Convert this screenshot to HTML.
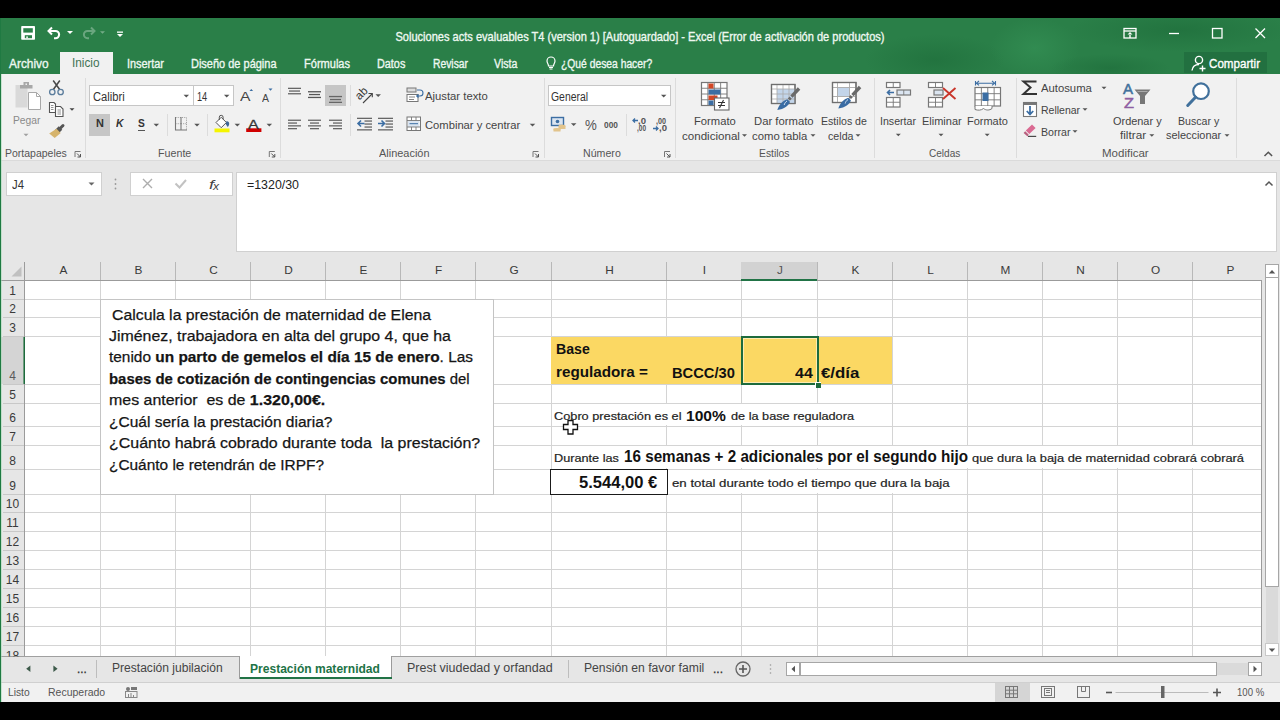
<!DOCTYPE html>
<html><head><meta charset="utf-8"><style>
html,body{margin:0;padding:0;width:1280px;height:720px;overflow:hidden;background:#000;}
body{position:relative;font-family:"Liberation Sans", sans-serif;}
div,svg{box-sizing:border-box;}
.t{position:absolute;white-space:pre;}
</style></head><body>
<div style="position:absolute;left:0px;top:18px;width:1280px;height:56px;background:#2a7f48;"></div>
<svg style="position:absolute;left:0;top:18px;" width="1280" height="56"><defs><radialGradient id="gd1"><stop offset="0" stop-color="#1c6a38" stop-opacity="0.55"/><stop offset="1" stop-color="#1c6a38" stop-opacity="0"/></radialGradient><radialGradient id="gl1"><stop offset="0" stop-color="#3a9a5c" stop-opacity="0.45"/><stop offset="1" stop-color="#3a9a5c" stop-opacity="0"/></radialGradient></defs><ellipse cx="935" cy="42" rx="70" ry="26" fill="url(#gd1)"/><ellipse cx="1035" cy="30" rx="45" ry="30" fill="url(#gl1)"/><ellipse cx="1180" cy="12" rx="110" ry="22" fill="url(#gd1)"/><ellipse cx="1110" cy="50" rx="60" ry="14" fill="url(#gd1)"/></svg>
<div style="position:absolute;left:0px;top:74px;width:1280px;height:87px;background:#f1f1f1;"></div>
<div style="position:absolute;left:0px;top:160px;width:1280px;height:1px;background:#dadada;"></div>
<div style="position:absolute;left:0px;top:161px;width:1280px;height:101px;background:#e6e6e6;"></div>
<div style="position:absolute;left:0px;top:262px;width:1280px;height:394px;background:#fff;"></div>
<div style="position:absolute;left:0px;top:656px;width:1280px;height:26px;background:#e6e6e6;"></div>
<div style="position:absolute;left:0px;top:682px;width:1280px;height:20px;background:#f1f1f1;"></div>
<div style="position:absolute;left:60px;top:52px;width:53px;height:22px;background:#f1f1f1;"></div>
<div style="position:absolute;left:1184px;top:52px;width:83px;height:21px;background:#227040;"></div>
<div style="position:absolute;left:85px;top:78px;width:1px;height:80px;background:#dcdcdc;"></div>
<div style="position:absolute;left:279.5px;top:78px;width:1px;height:80px;background:#dcdcdc;"></div>
<div style="position:absolute;left:543.5px;top:78px;width:1px;height:80px;background:#dcdcdc;"></div>
<div style="position:absolute;left:675px;top:78px;width:1px;height:80px;background:#dcdcdc;"></div>
<div style="position:absolute;left:873.5px;top:78px;width:1px;height:80px;background:#dcdcdc;"></div>
<div style="position:absolute;left:1015.5px;top:78px;width:1px;height:80px;background:#dcdcdc;"></div>
<div style="position:absolute;left:1236px;top:78px;width:1px;height:80px;background:#dcdcdc;"></div>
<div style="position:absolute;left:89px;top:85px;width:105px;height:21px;background:#fff;border:1px solid #c6c6c6;"></div>
<div style="position:absolute;left:193px;top:85px;width:41px;height:21px;background:#fff;border:1px solid #c6c6c6;"></div>
<div style="position:absolute;left:89px;top:114px;width:21px;height:22px;background:#c6c6c6;"></div>
<div style="position:absolute;left:137.5px;top:129.5px;width:7px;height:1.2px;background:#555;"></div>
<div style="position:absolute;left:166.8px;top:114px;width:1px;height:22px;background:#dcdcdc;"></div>
<div style="position:absolute;left:207px;top:114px;width:1px;height:22px;background:#dcdcdc;"></div>
<div style="position:absolute;left:325px;top:85px;width:21px;height:21px;background:#c6c6c6;"></div>
<div style="position:absolute;left:349.8px;top:85px;width:1px;height:21px;background:#dcdcdc;"></div>
<div style="position:absolute;left:349.8px;top:114px;width:1px;height:22px;background:#dcdcdc;"></div>
<div style="position:absolute;left:548px;top:85px;width:123px;height:21px;background:#fff;border:1px solid #c6c6c6;"></div>
<div style="position:absolute;left:625.7px;top:114px;width:1px;height:22px;background:#dcdcdc;"></div>
<div style="position:absolute;left:6px;top:172px;width:96px;height:24px;background:#fff;border:1px solid #d0d0d0;"></div>
<div style="position:absolute;left:130px;top:172px;width:103px;height:24px;background:#fff;border:1px solid #d0d0d0;"></div>
<div style="position:absolute;left:236px;top:172px;width:1041px;height:80px;background:#fff;border:1px solid #d0d0d0;"></div>
<div style="position:absolute;left:0px;top:262px;width:1262px;height:18px;background:#e6e6e6;"></div>
<div style="position:absolute;left:0px;top:280px;width:25px;height:376px;background:#e6e6e6;"></div>
<div style="position:absolute;left:100px;top:280px;width:1px;height:376px;background:#d4d4d4;"></div>
<div style="position:absolute;left:175px;top:280px;width:1px;height:376px;background:#d4d4d4;"></div>
<div style="position:absolute;left:250px;top:280px;width:1px;height:376px;background:#d4d4d4;"></div>
<div style="position:absolute;left:325px;top:280px;width:1px;height:376px;background:#d4d4d4;"></div>
<div style="position:absolute;left:400px;top:280px;width:1px;height:376px;background:#d4d4d4;"></div>
<div style="position:absolute;left:475px;top:280px;width:1px;height:376px;background:#d4d4d4;"></div>
<div style="position:absolute;left:551px;top:280px;width:1px;height:376px;background:#d4d4d4;"></div>
<div style="position:absolute;left:666px;top:280px;width:1px;height:376px;background:#d4d4d4;"></div>
<div style="position:absolute;left:741px;top:280px;width:1px;height:376px;background:#d4d4d4;"></div>
<div style="position:absolute;left:817px;top:280px;width:1px;height:376px;background:#d4d4d4;"></div>
<div style="position:absolute;left:892px;top:280px;width:1px;height:376px;background:#d4d4d4;"></div>
<div style="position:absolute;left:967px;top:280px;width:1px;height:376px;background:#d4d4d4;"></div>
<div style="position:absolute;left:1042px;top:280px;width:1px;height:376px;background:#d4d4d4;"></div>
<div style="position:absolute;left:1117px;top:280px;width:1px;height:376px;background:#d4d4d4;"></div>
<div style="position:absolute;left:1192px;top:280px;width:1px;height:376px;background:#d4d4d4;"></div>
<div style="position:absolute;left:25px;top:299px;width:1237px;height:1px;background:#d4d4d4;"></div>
<div style="position:absolute;left:25px;top:317px;width:1237px;height:1px;background:#d4d4d4;"></div>
<div style="position:absolute;left:25px;top:336px;width:1237px;height:1px;background:#d4d4d4;"></div>
<div style="position:absolute;left:25px;top:384px;width:1237px;height:1px;background:#d4d4d4;"></div>
<div style="position:absolute;left:25px;top:403px;width:1237px;height:1px;background:#d4d4d4;"></div>
<div style="position:absolute;left:25px;top:426px;width:1237px;height:1px;background:#d4d4d4;"></div>
<div style="position:absolute;left:25px;top:445px;width:1237px;height:1px;background:#d4d4d4;"></div>
<div style="position:absolute;left:25px;top:469px;width:1237px;height:1px;background:#d4d4d4;"></div>
<div style="position:absolute;left:25px;top:494px;width:1237px;height:1px;background:#d4d4d4;"></div>
<div style="position:absolute;left:25px;top:512px;width:1237px;height:1px;background:#d4d4d4;"></div>
<div style="position:absolute;left:25px;top:531px;width:1237px;height:1px;background:#d4d4d4;"></div>
<div style="position:absolute;left:25px;top:550px;width:1237px;height:1px;background:#d4d4d4;"></div>
<div style="position:absolute;left:25px;top:569px;width:1237px;height:1px;background:#d4d4d4;"></div>
<div style="position:absolute;left:25px;top:588px;width:1237px;height:1px;background:#d4d4d4;"></div>
<div style="position:absolute;left:25px;top:607px;width:1237px;height:1px;background:#d4d4d4;"></div>
<div style="position:absolute;left:25px;top:626px;width:1237px;height:1px;background:#d4d4d4;"></div>
<div style="position:absolute;left:25px;top:645px;width:1237px;height:1px;background:#d4d4d4;"></div>
<div style="position:absolute;left:100px;top:262px;width:1px;height:18px;background:#b8b8b8;"></div>
<div style="position:absolute;left:175px;top:262px;width:1px;height:18px;background:#b8b8b8;"></div>
<div style="position:absolute;left:250px;top:262px;width:1px;height:18px;background:#b8b8b8;"></div>
<div style="position:absolute;left:325px;top:262px;width:1px;height:18px;background:#b8b8b8;"></div>
<div style="position:absolute;left:400px;top:262px;width:1px;height:18px;background:#b8b8b8;"></div>
<div style="position:absolute;left:475px;top:262px;width:1px;height:18px;background:#b8b8b8;"></div>
<div style="position:absolute;left:551px;top:262px;width:1px;height:18px;background:#b8b8b8;"></div>
<div style="position:absolute;left:666px;top:262px;width:1px;height:18px;background:#b8b8b8;"></div>
<div style="position:absolute;left:741px;top:262px;width:1px;height:18px;background:#b8b8b8;"></div>
<div style="position:absolute;left:817px;top:262px;width:1px;height:18px;background:#b8b8b8;"></div>
<div style="position:absolute;left:892px;top:262px;width:1px;height:18px;background:#b8b8b8;"></div>
<div style="position:absolute;left:967px;top:262px;width:1px;height:18px;background:#b8b8b8;"></div>
<div style="position:absolute;left:1042px;top:262px;width:1px;height:18px;background:#b8b8b8;"></div>
<div style="position:absolute;left:1117px;top:262px;width:1px;height:18px;background:#b8b8b8;"></div>
<div style="position:absolute;left:1192px;top:262px;width:1px;height:18px;background:#b8b8b8;"></div>
<div style="position:absolute;left:3px;top:299px;width:22px;height:1px;background:#c8c8c8;"></div>
<div style="position:absolute;left:3px;top:317px;width:22px;height:1px;background:#c8c8c8;"></div>
<div style="position:absolute;left:3px;top:336px;width:22px;height:1px;background:#c8c8c8;"></div>
<div style="position:absolute;left:3px;top:384px;width:22px;height:1px;background:#c8c8c8;"></div>
<div style="position:absolute;left:3px;top:403px;width:22px;height:1px;background:#c8c8c8;"></div>
<div style="position:absolute;left:3px;top:426px;width:22px;height:1px;background:#c8c8c8;"></div>
<div style="position:absolute;left:3px;top:445px;width:22px;height:1px;background:#c8c8c8;"></div>
<div style="position:absolute;left:3px;top:469px;width:22px;height:1px;background:#c8c8c8;"></div>
<div style="position:absolute;left:3px;top:494px;width:22px;height:1px;background:#c8c8c8;"></div>
<div style="position:absolute;left:3px;top:512px;width:22px;height:1px;background:#c8c8c8;"></div>
<div style="position:absolute;left:3px;top:531px;width:22px;height:1px;background:#c8c8c8;"></div>
<div style="position:absolute;left:3px;top:550px;width:22px;height:1px;background:#c8c8c8;"></div>
<div style="position:absolute;left:3px;top:569px;width:22px;height:1px;background:#c8c8c8;"></div>
<div style="position:absolute;left:3px;top:588px;width:22px;height:1px;background:#c8c8c8;"></div>
<div style="position:absolute;left:3px;top:607px;width:22px;height:1px;background:#c8c8c8;"></div>
<div style="position:absolute;left:3px;top:626px;width:22px;height:1px;background:#c8c8c8;"></div>
<div style="position:absolute;left:3px;top:645px;width:22px;height:1px;background:#c8c8c8;"></div>
<div style="position:absolute;left:0px;top:280px;width:1262px;height:1px;background:#9b9b9b;"></div>
<div style="position:absolute;left:24px;top:262px;width:1px;height:394px;background:#9b9b9b;"></div>
<div style="position:absolute;left:1261px;top:280px;width:1px;height:376px;background:#9b9b9b;"></div>
<div style="position:absolute;left:741px;top:262px;width:76px;height:18px;background:#d2d2d2;"></div>
<div style="position:absolute;left:741px;top:279px;width:76px;height:2px;background:#217346;"></div>
<div style="position:absolute;left:0px;top:337px;width:25px;height:47px;background:#d4d4d4;"></div>
<div style="position:absolute;left:24px;top:337px;width:1px;height:47px;background:#1d6b3d;"></div>
<div style="position:absolute;left:23px;top:337px;width:1px;height:47px;background:#6f9c7f;"></div>
<div style="position:absolute;left:100px;top:299px;width:394px;height:196px;background:#fff;border:1px solid #c4c4c4;"></div>
<div style="position:absolute;left:551px;top:337px;width:341px;height:47px;background:#fbd863;"></div>
<div style="position:absolute;left:741px;top:336px;width:78px;height:49px;border:2px solid #1d6b3d;"></div>
<div style="position:absolute;left:743px;top:338px;width:74px;height:45px;border:1px solid rgba(255,255,255,0.5);"></div>
<div style="position:absolute;left:815px;top:381.5px;width:6px;height:6px;background:#1d6b3d;border-left:1px solid #fff;border-top:1px solid #fff;"></div>
<div style="position:absolute;left:552px;top:404px;width:330px;height:21px;background:#fff;"></div>
<div style="position:absolute;left:552px;top:446px;width:709px;height:22px;background:#fff;"></div>
<div style="position:absolute;left:667px;top:470px;width:300px;height:23px;background:#fff;"></div>
<div style="position:absolute;left:550px;top:468.5px;width:117.5px;height:26px;border:1.6px solid #1a1a1a;background:#fff;"></div>
<div style="position:absolute;left:1262px;top:262px;width:18px;height:394px;background:#e6e6e6;"></div>
<div style="position:absolute;left:1265px;top:264px;width:14px;height:14px;background:#fff;border:1px solid #a6a6a6;"></div>
<div style="position:absolute;left:1265px;top:277px;width:14px;height:310px;background:#fff;border:1px solid #a6a6a6;"></div>
<div style="position:absolute;left:1266px;top:587px;width:12px;height:56px;background:#dadada;"></div>
<div style="position:absolute;left:1265px;top:643px;width:14px;height:13px;background:#fff;border:1px solid #c8c8c8;"></div>
<div style="position:absolute;left:0px;top:656px;width:1262px;height:1px;background:#a0a0a0;"></div>
<div style="position:absolute;left:0px;top:682px;width:1280px;height:1px;background:#d0d0d0;"></div>
<div style="position:absolute;left:95.5px;top:660px;width:1px;height:18px;background:#bdbdbd;"></div>
<div style="position:absolute;left:239px;top:656px;width:153px;height:23px;background:#fff;border-left:1px solid #9a9a9a;border-right:1px solid #9a9a9a;"></div>
<div style="position:absolute;left:239.5px;top:677px;width:152px;height:2px;background:#217346;"></div>
<div style="position:absolute;left:568px;top:660px;width:1px;height:18px;background:#bdbdbd;"></div>
<div style="position:absolute;left:786px;top:662px;width:14px;height:14px;background:#fff;border:1px solid #a6a6a6;"></div>
<div style="position:absolute;left:800px;top:662px;width:417px;height:14px;background:#fff;border:1px solid #a6a6a6;"></div>
<div style="position:absolute;left:1217px;top:663px;width:31px;height:12px;background:#dadada;"></div>
<div style="position:absolute;left:1248px;top:662px;width:14px;height:14px;background:#fff;border:1px solid #a6a6a6;"></div>
<div style="position:absolute;left:995px;top:683px;width:35px;height:19px;background:#d5d5d5;"></div>
<div style="position:absolute;left:0px;top:18px;width:1px;height:684px;background:#1f7a42;"></div>
<div style="position:absolute;left:1px;top:74px;width:1px;height:628px;background:#9fd8b0;opacity:0.5;"></div>
<svg style="position:absolute;left:0;top:0;" width="1280" height="720" viewBox="0 0 1280 720"><rect x="21.2" y="26.1" width="13.8" height="13.6" rx="0.8" fill="#fff"/><rect x="23.3" y="28.2" width="9.5" height="4.4" fill="#2a7f48"/><rect x="24.8" y="35.2" width="7.2" height="3" fill="#2a7f48"/><rect x="26.3" y="36.4" width="1.5" height="1.8" fill="#fff"/><path d="M52 27.5l-3.5 3.5l3.5 3.5" fill="none" stroke="#fff" stroke-width="2"/><path d="M49 31h6.5a3.6 3.6 0 0 1 0 7.2h-1.5" fill="none" stroke="#fff" stroke-width="2.1"/><path d="M67.0 31.0h6l-3.0 3.0z" fill="#fff"/><g opacity="0.3"><path d="M91 27.5l3.5 3.5l-3.5 3.5" fill="none" stroke="#fff" stroke-width="2"/><path d="M94 31h-6.5a3.6 3.6 0 0 0 0 7.2h1.5" fill="none" stroke="#fff" stroke-width="2"/></g><g opacity="0.35"><path d="M100.0 31.25h5l-2.5 2.5z" fill="#fff"/></g><rect x="117" y="31.5" width="6" height="1.3" fill="#fff"/><path d="M117.0 34.0h6l-3.0 3.0z" fill="#fff"/><g fill="none" stroke="#fff" stroke-width="1.3"><rect x="1124" y="28.5" width="12" height="9.5"/><path d="M1124 31h12"/><path d="M1169 33.5h10"/><rect x="1212.5" y="28.5" width="9.5" height="9.5"/><path d="M1255.5 28.5l9.5 9.5M1265 28.5l-9.5 9.5"/></g><path d="M1130 32l-2.5 2.5h5z M1129.3 34h1.4v4h-1.4z" fill="#fff"/><path d="M547 61a4 4 0 1 1 8 0c0 2-1.5 3-1.5 5h-5c0-2-1.5-3-1.5-5z" fill="none" stroke="#fff" stroke-width="1.2"/><path d="M549 67.5h4M549.5 69h3" stroke="#fff" stroke-width="1"/><circle cx="1199" cy="60" r="3.6" fill="none" stroke="#fff" stroke-width="1.4"/><path d="M1192 70.5c0.5-4 3-6 7-6" fill="none" stroke="#fff" stroke-width="1.4"/><path d="M1202.5 65.5v6M1199.5 68.5h6" stroke="#fff" stroke-width="1.4"/><path d="M75.0 157v-5.5h5.5" fill="none" stroke="#777" stroke-width="1"/><path d="M77.0 153.5l3.5 3.5M80.5 154v3h-3" fill="none" stroke="#555" stroke-width="1"/><path d="M269.3 157v-5.5h5.5" fill="none" stroke="#777" stroke-width="1"/><path d="M271.3 153.5l3.5 3.5M274.8 154v3h-3" fill="none" stroke="#555" stroke-width="1"/><path d="M533.0 157v-5.5h5.5" fill="none" stroke="#777" stroke-width="1"/><path d="M535.0 153.5l3.5 3.5M538.5 154v3h-3" fill="none" stroke="#555" stroke-width="1"/><path d="M664.5 157v-5.5h5.5" fill="none" stroke="#777" stroke-width="1"/><path d="M666.5 153.5l3.5 3.5M670 154v3h-3" fill="none" stroke="#555" stroke-width="1"/><path d="M1264.5 156l3.8-3.8l3.8 3.8" fill="none" stroke="#555" stroke-width="1.5"/><rect x="15.5" y="85" width="12" height="22.5" fill="#d9d9d9"/><rect x="20" y="85" width="12.5" height="3.5" fill="#a8a8a8"/><rect x="23.5" y="82" width="5.5" height="4" fill="#a8a8a8"/><rect x="25.5" y="83.5" width="1.5" height="1.5" fill="#f1f1f1"/><path d="M28.5 92.5h8l4 4v13h-12z" fill="#fff" stroke="#a8a8a8" stroke-width="1"/><path d="M36.5 92.5v4h4" fill="none" stroke="#a8a8a8" stroke-width="1"/><path d="M23.5 133.75h5l-2.5 2.5z" fill="#a0a0a0"/><path d="M53.2 80.5l6.8 9.5M59.8 80.5l-6.8 9.5" stroke="#474747" stroke-width="1.5"/><circle cx="52.3" cy="92" r="2.7" fill="#f1f1f1" stroke="#5a7c9c" stroke-width="1.3"/><circle cx="60.6" cy="92" r="2.7" fill="#f1f1f1" stroke="#5a7c9c" stroke-width="1.3"/><path d="M49.5 102.5h4.5l1.5 1.5v8.5h-6z" fill="#fff" stroke="#555" stroke-width="1.1"/><path d="M55.5 106.5h5l2.5 2.5v7.5h-7.5z" fill="#fff" stroke="#555" stroke-width="1.1"/><path d="M51 105.5h2.5M51 107.5h2.5M51 109.5h2.5M57.5 110h3.5M57.5 112h3.5M57.5 114h3.5" stroke="#777" stroke-width="0.8"/><path d="M69.5 108.25h5l-2.5 2.5z" fill="#444"/><path d="M63 125.5l-3 3" stroke="#555" stroke-width="3" stroke-linecap="round"/><path d="M60.5 128l-4 4" stroke="#555" stroke-width="5"/><path d="M56.5 128.8l4.2 4.2l-6 5l-5.5-4.5z" fill="#d6b46c"/><path d="M183.55 94.625h5.5l-2.75 2.75z" fill="#555"/><path d="M223.95 94.625h5.5l-2.75 2.75z" fill="#555"/><path d="M249.5 91l1.8-2l1.8 2" fill="#3c6ea3"/><path d="M268.5 88.5h4l-2 2.2z" fill="#3c6ea3"/><path d="M153.55 123.625h5.5l-2.75 2.75z" fill="#555"/><path d="M175.5 117.5h11M181 123.7h5.5M175.5 123.7h5.5M186.5 117.5v12.5" fill="none" stroke="#999" stroke-width="1" stroke-dasharray="1 1.2"/><path d="M175.5 117v13.5M181 117v13.5M175 130h12" fill="none" stroke="#777" stroke-width="1.1"/><path d="M194.25 123.625h5.5l-2.75 2.75z" fill="#555"/><path d="M216 122.5l5.2-5.2l5.2 5.2l-5.2 5.2z" fill="#fff" stroke="#555" stroke-width="1"/><path d="M219.3 120v-2.8a1.9 1.9 0 0 1 3.8 0v2" fill="none" stroke="#555" stroke-width="1"/><path d="M226.2 121.5c1.8-0.5 3 0.5 3 2.2c0 1.4-0.9 2.5-1.5 3.5c-0.3-1.3-1.3-2-1.8-3z" fill="#3f6797"/><rect x="214.5" y="128.5" width="15" height="3.8" fill="#f5f500"/><path d="M234.55 123.625h5.5l-2.75 2.75z" fill="#555"/><rect x="246.2" y="128.3" width="15.2" height="3.7" fill="#d00000"/><path d="M266.55 123.625h5.5l-2.75 2.75z" fill="#555"/><rect x="288.0" y="87.7" width="13" height="1.3" fill="#666"/><rect x="289.0" y="90.4" width="11" height="1.3" fill="#666"/><rect x="288.0" y="93.10000000000001" width="13" height="1.3" fill="#666"/><rect x="308.0" y="91.10000000000001" width="13" height="1.3" fill="#555"/><rect x="309.0" y="93.9" width="11" height="1.3" fill="#555"/><rect x="308.0" y="96.80000000000001" width="13" height="1.3" fill="#555"/><rect x="329.0" y="95.9" width="13" height="1.3" fill="#666"/><rect x="330.0" y="98.9" width="11" height="1.3" fill="#666"/><rect x="329.0" y="101.7" width="13" height="1.3" fill="#666"/><text x="0" y="0" transform="translate(359.5 100.5) rotate(-45)" font-family="Liberation Sans" font-size="11.5" fill="#333">ab</text><path d="M363 103l9-9" stroke="#444" stroke-width="1.1"/><path d="M368.5 93.5h3.8v3.8" fill="none" stroke="#444" stroke-width="1.1"/><path d="M375.45 94.125h5.5l-2.75 2.75z" fill="#555"/><rect x="288" y="119.60000000000001" width="13" height="1.3" fill="#666"/><rect x="288" y="122.4" width="9" height="1.3" fill="#666"/><rect x="288" y="125.2" width="13" height="1.3" fill="#666"/><rect x="288" y="128.0" width="9" height="1.3" fill="#666"/><rect x="308.0" y="119.60000000000001" width="13" height="1.3" fill="#666"/><rect x="310.0" y="122.4" width="9" height="1.3" fill="#666"/><rect x="308.0" y="125.2" width="13" height="1.3" fill="#666"/><rect x="310.0" y="128.0" width="9" height="1.3" fill="#666"/><rect x="329" y="119.60000000000001" width="13" height="1.3" fill="#666"/><rect x="333" y="122.4" width="9" height="1.3" fill="#666"/><rect x="329" y="125.2" width="13" height="1.3" fill="#666"/><rect x="333" y="128.0" width="9" height="1.3" fill="#666"/><rect x="357" y="117.7" width="15" height="1.3" fill="#666"/><rect x="357" y="129.20000000000002" width="15" height="1.3" fill="#666"/><rect x="364.5" y="120.4" width="7.5" height="1.3" fill="#666"/><rect x="364.5" y="123.4" width="7.5" height="1.3" fill="#666"/><rect x="364.5" y="126.4" width="7.5" height="1.3" fill="#666"/><path d="M364.5 123.5h-6.5M361 120.5l-3 3l3 3" fill="none" stroke="#3c6ea3" stroke-width="1.6"/><rect x="378" y="117.7" width="15" height="1.3" fill="#666"/><rect x="378" y="129.20000000000002" width="15" height="1.3" fill="#666"/><rect x="385.5" y="120.4" width="7.5" height="1.3" fill="#666"/><rect x="385.5" y="123.4" width="7.5" height="1.3" fill="#666"/><rect x="385.5" y="126.4" width="7.5" height="1.3" fill="#666"/><path d="M378 123.5h6.5M381.5 120.5l3 3l-3 3" fill="none" stroke="#3c6ea3" stroke-width="1.6"/><rect x="407" y="88" width="9" height="4" fill="#ddd" stroke="#777" stroke-width="1"/><rect x="407" y="94.5" width="11" height="7" fill="#fff" stroke="#777" stroke-width="1"/><path d="M409 97h6M409 99.5h5" stroke="#777" stroke-width="0.9"/><path d="M417 90h3a2 2 0 0 1 0 6h-3M418.5 94.5l-1.8 1.5l1.8 1.5" fill="none" stroke="#3c6ea3" stroke-width="1.1"/><rect x="407" y="117" width="13.5" height="13.5" fill="#fff" stroke="#777" stroke-width="1"/><rect x="408" y="120.5" width="11.5" height="6.5" fill="#dbe5f1"/><path d="M407 120.5h13.5M407 127h13.5M411.5 117v3.5M416 117v3.5M411.5 127v3.5M416 127v3.5" stroke="#777" stroke-width="0.9"/><path d="M409.5 123.7h8.5" stroke="#3c6ea3" stroke-width="1"/><path d="M529.75 123.625h5.5l-2.75 2.75z" fill="#555"/><path d="M660.95 94.625h5.5l-2.75 2.75z" fill="#555"/><rect x="551.5" y="117.5" width="12" height="8" fill="#dbe5f1" stroke="#3c6ea3" stroke-width="1.4"/><circle cx="557.5" cy="121.5" r="1.8" fill="#3c6ea3"/><ellipse cx="562" cy="126" rx="3.5" ry="1.5" fill="#e2c48c"/><rect x="558.5" y="126" width="7" height="3" fill="#e2c48c"/><ellipse cx="557" cy="129.5" rx="3.5" ry="1.5" fill="#e2c48c"/><rect x="553.5" y="128.5" width="7" height="3" fill="#e2c48c"/><path d="M570.95 123.125h5.5l-2.75 2.75z" fill="#555"/><path d="M638 120.5h-5M635 118.5l-2 2l2 2" fill="none" stroke="#3c6ea3" stroke-width="1.3"/><path d="M653 128.5h5M656 126.5l2 2l-2 2" fill="none" stroke="#3c6ea3" stroke-width="1.3"/><rect x="701.5" y="82.5" width="25.5" height="23" fill="#fff" stroke="#777" stroke-width="1.2"/><path d="M707.875 82.5v23" stroke="#777" stroke-width="0.9"/><path d="M714.25 82.5v23" stroke="#777" stroke-width="0.9"/><path d="M720.625 82.5v23" stroke="#777" stroke-width="0.9"/><path d="M701.5 88.25h25.5" stroke="#777" stroke-width="0.9"/><path d="M701.5 94.0h25.5" stroke="#777" stroke-width="0.9"/><path d="M701.5 99.75h25.5" stroke="#777" stroke-width="0.9"/><rect x="708.5" y="83.5" width="5" height="5" fill="#d24726"/><rect x="708.5" y="89.5" width="12" height="5" fill="#3c6ea3"/><rect x="708.5" y="95.5" width="9" height="4.5" fill="#d24726"/><rect x="708.5" y="100.5" width="5" height="4.5" fill="#3c6ea3"/><rect x="714.5" y="98" width="14.5" height="12" fill="#fff" stroke="#666" stroke-width="1.1"/><path d="M718 102.5h7M718 105.5h7M723.5 100l-4 8" stroke="#333" stroke-width="1.1"/><path d="M742.0 134.25h5l-2.5 2.5z" fill="#555"/><rect x="771.5" y="84.5" width="23.5" height="19" fill="#fff" stroke="#6f6f6f" stroke-width="1.2"/><rect x="777" y="89" width="17.5" height="14" fill="#c3d5ea"/><path d="M777 84.5v19M783 84.5v19M789 84.5v19M771.5 89h23.5M771.5 94h23.5M771.5 99h23.5" stroke="#a9a9a9" stroke-width="0.8"/><rect x="771.5" y="84.5" width="23.5" height="19" fill="none" stroke="#6f6f6f" stroke-width="1.2"/><g transform="translate(0 0)"><path d="M797.8 87.3L800.3 89.8L792.6 97.8L790.3 95.6z" fill="#6a6a6a"/><path d="M789.6 96.6L791.8 98.8L790 100.6L787.8 98.4z" fill="#6a6a6a"/><path d="M787.3 99.2L789.9 101.8C789 105.5 784 109.3 777.3 110C778.8 105 782.5 100.5 787.3 99.2z" fill="#3a6ca3"/><path d="M787 101c-1.5 1-2.5 2.5-2.8 4" fill="none" stroke="#cfe0f2" stroke-width="1"/></g><path d="M810.5 134.25h5l-2.5 2.5z" fill="#555"/><rect x="832.5" y="82.5" width="23.5" height="20" fill="#fff" stroke="#6f6f6f" stroke-width="1.2"/><rect x="837.5" y="87.5" width="12" height="9" fill="#c3d5ea"/><path d="M837.5 82.5v20M849.5 82.5v20M832.5 87.5h23.5M832.5 96.5h23.5" stroke="#a9a9a9" stroke-width="0.9"/><rect x="832.5" y="82.5" width="23.5" height="20" fill="none" stroke="#6f6f6f" stroke-width="1.2"/><g transform="translate(61 -1.5)"><path d="M797.8 87.3L800.3 89.8L792.6 97.8L790.3 95.6z" fill="#6a6a6a"/><path d="M789.6 96.6L791.8 98.8L790 100.6L787.8 98.4z" fill="#6a6a6a"/><path d="M787.3 99.2L789.9 101.8C789 105.5 784 109.3 777.3 110C778.8 105 782.5 100.5 787.3 99.2z" fill="#3a6ca3"/><path d="M787 101c-1.5 1-2.5 2.5-2.8 4" fill="none" stroke="#cfe0f2" stroke-width="1"/></g><path d="M855.5 134.25h5l-2.5 2.5z" fill="#555"/><rect x="886.5" y="82.5" width="13.5" height="5" fill="#fff" stroke="#777" stroke-width="1.2"/><path d="M893.25 82.5v5" stroke="#777" stroke-width="0.9"/><rect x="897" y="90" width="13.5" height="5" fill="#dbe5f1" stroke="#777" stroke-width="1.2"/><path d="M903.75 90v5" stroke="#777" stroke-width="0.9"/><rect x="886.5" y="97.5" width="13.5" height="9.5" fill="#fff" stroke="#777" stroke-width="1.2"/><path d="M893.25 97.5v9.5" stroke="#777" stroke-width="0.9"/><path d="M886.5 102.25h13.5" stroke="#777" stroke-width="0.9"/><path d="M894 92.5h-6.5M890 90l-2.5 2.5l2.5 2.5" fill="none" stroke="#3c6ea3" stroke-width="1.6"/><path d="M895.8 133.75h5l-2.5 2.5z" fill="#555"/><rect x="928.5" y="82.5" width="14" height="5" fill="#fff" stroke="#777" stroke-width="1.2"/><path d="M935.5 82.5v5" stroke="#777" stroke-width="0.9"/><rect x="934" y="90" width="9" height="5" fill="#dbe5f1" stroke="#777" stroke-width="1.2"/><rect x="928.5" y="97.5" width="14" height="9.5" fill="#fff" stroke="#777" stroke-width="1.2"/><path d="M935.5 97.5v9.5" stroke="#777" stroke-width="0.9"/><path d="M928.5 102.25h14" stroke="#777" stroke-width="0.9"/><path d="M943 88l12.5 11M955.5 88l-12.5 11" stroke="#c9362b" stroke-width="1.9"/><path d="M938.5 133.75h5l-2.5 2.5z" fill="#555"/><rect x="975" y="87.5" width="25.5" height="18.5" fill="#fff" stroke="#777" stroke-width="1.2"/><path d="M981.375 87.5v18.5" stroke="#777" stroke-width="0.9"/><path d="M987.75 87.5v18.5" stroke="#777" stroke-width="0.9"/><path d="M994.125 87.5v18.5" stroke="#777" stroke-width="0.9"/><path d="M975 93.66666666666667h25.5" stroke="#777" stroke-width="0.9"/><path d="M975 99.83333333333333h25.5" stroke="#777" stroke-width="0.9"/><rect x="982.5" y="92.5" width="6" height="8.5" fill="#3c6ea3"/><path d="M975 106v3.5c3 1 6 1 8.5-1c2.5 2 6 2 8.5 0v-2.5" fill="#fff" stroke="#777" stroke-width="1"/><path d="M975.5 81v4.5M995.5 81v4.5M976 83.2h19" stroke="#3c6ea3" stroke-width="1.1"/><path d="M979 81l-2.5 2.2l2.5 2.2M992 81l2.5 2.2l-2.5 2.2" fill="none" stroke="#3c6ea3" stroke-width="1.1"/><path d="M984.7 133.75h5l-2.5 2.5z" fill="#555"/><path d="M1036.5 81.5h-13l7 6l-7 6.5h13.5" fill="none" stroke="#333" stroke-width="2"/><path d="M1101.5 86.75h5l-2.5 2.5z" fill="#555"/><rect x="1023.5" y="102.5" width="13" height="14" fill="#fff" stroke="#777" stroke-width="1.1"/><rect x="1023.5" y="102.5" width="13" height="2.5" fill="#777"/><path d="M1030 106v8M1026.8 111l3.2 3.5l3.2-3.5" fill="none" stroke="#3c6ea3" stroke-width="1.8"/><path d="M1082.5 108.25h5l-2.5 2.5z" fill="#555"/><path d="M1032 124.5L1035.6 128.1L1029.3 134L1025.8 130.5Z" fill="#da6a92"/><path d="M1025.2 131.3L1028.6 134.6L1027.6 136.6L1023.6 133Z" fill="#b9607f"/><path d="M1028 136.4h8.2" stroke="#4a4a4a" stroke-width="1.2"/><path d="M1072.5 130.25h5l-2.5 2.5z" fill="#555"/><path d="M1134.5 89.5h16l-5.5 6.5v8h-5v-8z" fill="#777"/><path d="M1137.5 91.5h10" stroke="#aaa" stroke-width="1"/><path d="M1149.3 134.25h5l-2.5 2.5z" fill="#555"/><circle cx="1201" cy="91.2" r="7.8" fill="#fff" stroke="#41719c" stroke-width="2.2"/><path d="M1195.5 97.2l-7.8 8.3" stroke="#41719c" stroke-width="3" stroke-linecap="round"/><path d="M1224.5 134.25h5l-2.5 2.5z" fill="#555"/><path d="M88.5 182.5h6l-3.0 3.0z" fill="#666"/><circle cx="115.5" cy="179.5" r="0.9" fill="#999"/><circle cx="115.5" cy="184" r="0.9" fill="#999"/><circle cx="115.5" cy="188.5" r="0.9" fill="#999"/><path d="M143 179l9 9M152 179l-9 9" stroke="#adadad" stroke-width="1.4"/><path d="M175.5 183.5l4 4l6.5-7.5" fill="none" stroke="#c2c2c2" stroke-width="2"/><path d="M1265.5 185.5l3.5-3.5l3.5 3.5" fill="none" stroke="#555" stroke-width="1.5"/><path d="M21.5 266.5v10h-10z" fill="#c0c0c0"/><path d="M568 420.5h5v4h4.5v5h-4.5v4.5h-5v-4.5h-4.5v-5h4.5z" fill="#fff" stroke="#111" stroke-width="1.3"/><path d="M1268.8 273.5l3.2-3.5l3.2 3.5z" fill="#555"/><path d="M1268.8 648.5l3.2 3.5l3.2-3.5z" fill="#555"/><path d="M30.4 665.5v6.6l-4.2-3.3z" fill="#3d5a4a"/><path d="M53.4 665.5v6.6l4.2-3.3z" fill="#3d5a4a"/><circle cx="743" cy="669" r="7" fill="none" stroke="#666" stroke-width="1.3"/><path d="M739 669h8M743 665v8" stroke="#555" stroke-width="1.6"/><circle cx="770.5" cy="665" r="0.8" fill="#999"/><circle cx="770.5" cy="669" r="0.8" fill="#999"/><circle cx="770.5" cy="673" r="0.8" fill="#999"/><path d="M795 665.8v6.4l-3.5-3.2z" fill="#555"/><path d="M1253.5 665.8v6.4l3.5-3.2z" fill="#555"/><circle cx="128" cy="689" r="2" fill="#777"/><rect x="131" y="687" width="6" height="3" fill="#777"/><rect x="125.5" y="691.5" width="11.5" height="6" fill="none" stroke="#888" stroke-width="1"/><path d="M128.5 697v-3M131 697v-4M133.5 697v-2" stroke="#888" stroke-width="1"/><g fill="none" stroke="#777" stroke-width="1"><rect x="1005.5" y="686.5" width="12" height="11"/><path d="M1009.5 686.5v11M1013.5 686.5v11M1005.5 690.2h12M1005.5 693.8h12"/><rect x="1041.5" y="686.5" width="13" height="11"/><rect x="1044.5" y="688.5" width="7" height="7"/><path d="M1046 690.5h4M1046 692.5h4"/><rect x="1077.5" y="686.5" width="12" height="11"/><path d="M1081.5 686.5v5h4v-5"/></g><path d="M1106 692.5h6" stroke="#555" stroke-width="1.6"/><path d="M1115.5 692.5h93" stroke="#bbb" stroke-width="1"/><rect x="1161" y="686" width="3.5" height="12" fill="#666"/><path d="M1213 692.5h8M1217 688.5v8" stroke="#555" stroke-width="1.6"/></svg>
<div class="t" style="left:-360.5px;width:2000px;text-align:center;top:30.67px;font-size:12.2px;line-height:12.2px;color:#eef8f1;transform:scaleX(0.9061);transform-origin:center;-webkit-text-stroke:0.35px #eef8f1;"><span id="t0">Soluciones acts evaluables T4 (version 1) [Autoguardado] - Excel (Error de activación de productos)</span></div>
<div class="t" style="left:9px;top:58.42px;font-size:12.5px;line-height:12.5px;color:#eef8f1;transform:scaleX(0.9523);transform-origin:left;-webkit-text-stroke:0.35px #eef8f1;"><span id="t1">Archivo</span></div>
<div class="t" style="left:72px;top:57.42px;font-size:12.5px;line-height:12.5px;color:#3f7354;transform:scaleX(0.9422);transform-origin:left;"><span id="t2">Inicio</span></div>
<div class="t" style="left:126.5px;top:58.42px;font-size:12.5px;line-height:12.5px;color:#eef8f1;transform:scaleX(0.8728);transform-origin:left;-webkit-text-stroke:0.35px #eef8f1;"><span id="t3">Insertar</span></div>
<div class="t" style="left:191px;top:58.42px;font-size:12.5px;line-height:12.5px;color:#eef8f1;transform:scaleX(0.8788);transform-origin:left;-webkit-text-stroke:0.35px #eef8f1;"><span id="t4">Diseño de página</span></div>
<div class="t" style="left:303.5px;top:58.42px;font-size:12.5px;line-height:12.5px;color:#eef8f1;transform:scaleX(0.8830);transform-origin:left;-webkit-text-stroke:0.35px #eef8f1;"><span id="t5">Fórmulas</span></div>
<div class="t" style="left:376.7px;top:58.42px;font-size:12.5px;line-height:12.5px;color:#eef8f1;transform:scaleX(0.8666);transform-origin:left;-webkit-text-stroke:0.35px #eef8f1;"><span id="t6">Datos</span></div>
<div class="t" style="left:432.5px;top:58.42px;font-size:12.5px;line-height:12.5px;color:#eef8f1;transform:scaleX(0.8260);transform-origin:left;-webkit-text-stroke:0.35px #eef8f1;"><span id="t7">Revisar</span></div>
<div class="t" style="left:494.3px;top:58.42px;font-size:12.5px;line-height:12.5px;color:#eef8f1;transform:scaleX(0.8485);transform-origin:left;-webkit-text-stroke:0.35px #eef8f1;"><span id="t8">Vista</span></div>
<div class="t" style="left:561px;top:58.42px;font-size:12.5px;line-height:12.5px;color:#eef8f1;transform:scaleX(0.8253);transform-origin:left;-webkit-text-stroke:0.35px #eef8f1;"><span id="t9">¿Qué desea hacer?</span></div>
<div class="t" style="left:1209px;top:58.42px;font-size:12.5px;line-height:12.5px;color:#fff;transform:scaleX(0.9294);transform-origin:left;-webkit-text-stroke:0.35px #fff;"><span id="t10">Compartir</span></div>
<div class="t" style="left:4.5px;top:148.29px;font-size:11px;line-height:11px;color:#555;transform:scaleX(0.9533);transform-origin:left;"><span id="t11">Portapapeles</span></div>
<div class="t" style="left:158px;top:148.29px;font-size:11px;line-height:11px;color:#555;transform:scaleX(0.9723);transform-origin:left;"><span id="t12">Fuente</span></div>
<div class="t" style="left:378.8px;top:148.29px;font-size:11px;line-height:11px;color:#555;transform:scaleX(0.9948);transform-origin:left;"><span id="t13">Alineación</span></div>
<div class="t" style="left:583px;top:148.29px;font-size:11px;line-height:11px;color:#555;transform:scaleX(0.9661);transform-origin:left;"><span id="t14">Número</span></div>
<div class="t" style="left:758.8px;top:148.29px;font-size:11px;line-height:11px;color:#555;transform:scaleX(0.9412);transform-origin:left;"><span id="t15">Estilos</span></div>
<div class="t" style="left:928.9px;top:148.29px;font-size:11px;line-height:11px;color:#555;transform:scaleX(0.9139);transform-origin:left;"><span id="t16">Celdas</span></div>
<div class="t" style="left:1101.5px;top:148.29px;font-size:11px;line-height:11px;color:#555;transform:scaleX(1.0465);transform-origin:left;"><span id="t17">Modificar</span></div>
<div class="t" style="left:13px;top:115.27px;font-size:11.5px;line-height:11.5px;color:#8a8a8a;transform:scaleX(0.8961);transform-origin:left;"><span id="t18">Pegar</span></div>
<div class="t" style="left:92.6px;top:90.84px;font-size:12px;line-height:12px;color:#333;transform:scaleX(0.9319);transform-origin:left;"><span id="t19">Calibri</span></div>
<div class="t" style="left:197.4px;top:90.84px;font-size:12px;line-height:12px;color:#333;transform:scaleX(0.7635);transform-origin:left;"><span id="t20">14</span></div>
<div class="t" style="left:240px;top:91.42px;font-size:12.5px;line-height:12.5px;color:#444;transform:scaleX(1.2584);transform-origin:left;"><span id="t21">A</span></div>
<div class="t" style="left:261.7px;top:93.53px;font-size:10px;line-height:10px;color:#444;transform:scaleX(1.0492);transform-origin:left;"><span id="t22">A</span></div>
<div class="t" style="left:95.7px;top:118.47px;font-size:11.5px;line-height:11.5px;color:#333;font-weight:bold;transform:scaleX(0.9504);transform-origin:left;"><span id="t23">N</span></div>
<div class="t" style="left:115.5px;top:118.47px;font-size:11.5px;line-height:11.5px;color:#333;font-weight:bold;transform:scaleX(0.9023);transform-origin:left;font-style:italic;"><span id="t24">K</span></div>
<div class="t" style="left:137.6px;top:118.47px;font-size:11.5px;line-height:11.5px;color:#333;font-weight:bold;transform:scaleX(0.8864);transform-origin:left;"><span id="t25">S</span></div>
<div class="t" style="left:248px;top:117.60px;font-size:13px;line-height:13px;color:#333;transform:scaleX(1.2339);transform-origin:left;-webkit-text-stroke:0.3px #333;"><span id="t26">A</span></div>
<div class="t" style="left:425px;top:91.07px;font-size:11.5px;line-height:11.5px;color:#444;transform:scaleX(0.9809);transform-origin:left;"><span id="t27">Ajustar texto</span></div>
<div class="t" style="left:425.2px;top:119.87px;font-size:11.5px;line-height:11.5px;color:#444;transform:scaleX(0.9745);transform-origin:left;"><span id="t28">Combinar y centrar</span></div>
<div class="t" style="left:551.1px;top:90.54px;font-size:12px;line-height:12px;color:#333;transform:scaleX(0.8688);transform-origin:left;"><span id="t29">General</span></div>
<div class="t" style="left:584.9px;top:117.38px;font-size:15.5px;line-height:15.5px;color:#555;transform:scaleX(0.8553);transform-origin:left;"><span id="t30">%</span></div>
<div class="t" style="left:603.9px;top:119.76px;font-size:9.5px;line-height:9.5px;color:#555;font-weight:bold;transform:scaleX(0.8765);transform-origin:left;"><span id="t31">000</span></div>
<div class="t" style="left:638px;top:117.38px;font-size:9px;line-height:9px;color:#555;font-weight:bold;transform:scaleX(1.0644);transform-origin:left;"><span id="t32">,0</span></div>
<div class="t" style="left:637px;top:124.38px;font-size:9px;line-height:9px;color:#555;font-weight:bold;transform:scaleX(0.7191);transform-origin:left;"><span id="t33">,00</span></div>
<div class="t" style="left:656px;top:117.38px;font-size:9px;line-height:9px;color:#555;font-weight:bold;transform:scaleX(0.7990);transform-origin:left;"><span id="t34">,00</span></div>
<div class="t" style="left:659px;top:124.38px;font-size:9px;line-height:9px;color:#555;font-weight:bold;transform:scaleX(1.0644);transform-origin:left;"><span id="t35">,0</span></div>
<div class="t" style="left:693.8px;top:115.97px;font-size:11.5px;line-height:11.5px;color:#444;transform:scaleX(0.9760);transform-origin:left;"><span id="t36">Formato</span></div>
<div class="t" style="left:681.8px;top:130.77px;font-size:11.5px;line-height:11.5px;color:#444;transform:scaleX(1.0061);transform-origin:left;"><span id="t37">condicional</span></div>
<div class="t" style="left:754px;top:115.97px;font-size:11.5px;line-height:11.5px;color:#444;transform:scaleX(0.9816);transform-origin:left;"><span id="t38">Dar formato</span></div>
<div class="t" style="left:752.4px;top:130.77px;font-size:11.5px;line-height:11.5px;color:#444;transform:scaleX(0.9846);transform-origin:left;"><span id="t39">como tabla</span></div>
<div class="t" style="left:820.6px;top:115.97px;font-size:11.5px;line-height:11.5px;color:#444;transform:scaleX(0.9206);transform-origin:left;"><span id="t40">Estilos de</span></div>
<div class="t" style="left:827.5px;top:130.77px;font-size:11.5px;line-height:11.5px;color:#444;transform:scaleX(0.9273);transform-origin:left;"><span id="t41">celda</span></div>
<div class="t" style="left:879.9px;top:115.57px;font-size:11.5px;line-height:11.5px;color:#444;transform:scaleX(0.9231);transform-origin:left;"><span id="t42">Insertar</span></div>
<div class="t" style="left:921.6px;top:115.57px;font-size:11.5px;line-height:11.5px;color:#444;transform:scaleX(0.9555);transform-origin:left;"><span id="t43">Eliminar</span></div>
<div class="t" style="left:966.9px;top:115.57px;font-size:11.5px;line-height:11.5px;color:#444;transform:scaleX(0.9550);transform-origin:left;"><span id="t44">Formato</span></div>
<div class="t" style="left:1040.7px;top:83.47px;font-size:11.5px;line-height:11.5px;color:#444;transform:scaleX(0.9811);transform-origin:left;"><span id="t45">Autosuma</span></div>
<div class="t" style="left:1040.7px;top:104.77px;font-size:11.5px;line-height:11.5px;color:#444;transform:scaleX(0.9130);transform-origin:left;"><span id="t46">Rellenar</span></div>
<div class="t" style="left:1040.7px;top:126.87px;font-size:11.5px;line-height:11.5px;color:#444;transform:scaleX(0.9232);transform-origin:left;"><span id="t47">Borrar</span></div>
<div class="t" style="left:1123.3px;top:81.93px;font-size:14.5px;line-height:14.5px;color:#41719c;transform:scaleX(1.0339);transform-origin:left;-webkit-text-stroke:0.5px #41719c;"><span id="t48">A</span></div>
<div class="t" style="left:1123.5px;top:95.75px;font-size:14px;line-height:14px;color:#8e5ea2;transform:scaleX(1.1679);transform-origin:left;-webkit-text-stroke:0.5px #8e5ea2;"><span id="t49">Z</span></div>
<div class="t" style="left:1112.9px;top:115.77px;font-size:11.5px;line-height:11.5px;color:#444;transform:scaleX(0.9503);transform-origin:left;"><span id="t50">Ordenar y</span></div>
<div class="t" style="left:1120.4px;top:130.37px;font-size:11.5px;line-height:11.5px;color:#444;transform:scaleX(1.0210);transform-origin:left;"><span id="t51">filtrar</span></div>
<div class="t" style="left:1177.7px;top:115.77px;font-size:11.5px;line-height:11.5px;color:#444;transform:scaleX(0.9207);transform-origin:left;"><span id="t52">Buscar y</span></div>
<div class="t" style="left:1166.4px;top:130.37px;font-size:11.5px;line-height:11.5px;color:#444;transform:scaleX(0.9489);transform-origin:left;"><span id="t53">seleccionar</span></div>
<div class="t" style="left:12px;top:178.84px;font-size:12px;line-height:12px;color:#333;transform:scaleX(0.9458);transform-origin:left;"><span id="t54">J4</span></div>
<div class="t" style="left:208.5px;top:178.00px;font-size:13px;line-height:13px;color:#444;transform:scaleX(1.3793);transform-origin:left;font-style:italic;font-family:"Liberation Serif",serif;font-weight:bold;"><span id="t55">f</span></div>
<div class="t" style="left:213px;top:181.53px;font-size:10px;line-height:10px;color:#444;transform:scaleX(1.2000);transform-origin:left;font-style:italic;font-family:"Liberation Serif",serif;"><span id="t56">x</span></div>
<div class="t" style="left:247px;top:178.84px;font-size:12px;line-height:12px;color:#222;transform:scaleX(1.0319);transform-origin:left;"><span id="t57">=1320/30</span></div>
<div class="t" style="left:-936.5px;width:2000px;text-align:center;top:265.31px;font-size:11.8px;line-height:11.8px;color:#3a3a3a;"><span id="t58">A</span></div>
<div class="t" style="left:-861.5px;width:2000px;text-align:center;top:265.31px;font-size:11.8px;line-height:11.8px;color:#3a3a3a;"><span id="t59">B</span></div>
<div class="t" style="left:-786.5px;width:2000px;text-align:center;top:265.31px;font-size:11.8px;line-height:11.8px;color:#3a3a3a;"><span id="t60">C</span></div>
<div class="t" style="left:-711.5px;width:2000px;text-align:center;top:265.31px;font-size:11.8px;line-height:11.8px;color:#3a3a3a;"><span id="t61">D</span></div>
<div class="t" style="left:-636.5px;width:2000px;text-align:center;top:265.31px;font-size:11.8px;line-height:11.8px;color:#3a3a3a;"><span id="t62">E</span></div>
<div class="t" style="left:-561.5px;width:2000px;text-align:center;top:265.31px;font-size:11.8px;line-height:11.8px;color:#3a3a3a;"><span id="t63">F</span></div>
<div class="t" style="left:-486.0px;width:2000px;text-align:center;top:265.31px;font-size:11.8px;line-height:11.8px;color:#3a3a3a;"><span id="t64">G</span></div>
<div class="t" style="left:-390.5px;width:2000px;text-align:center;top:265.31px;font-size:11.8px;line-height:11.8px;color:#3a3a3a;"><span id="t65">H</span></div>
<div class="t" style="left:-295.5px;width:2000px;text-align:center;top:265.31px;font-size:11.8px;line-height:11.8px;color:#3a3a3a;"><span id="t66">I</span></div>
<div class="t" style="left:-220.0px;width:2000px;text-align:center;top:265.31px;font-size:11.8px;line-height:11.8px;color:#555;"><span id="t67">J</span></div>
<div class="t" style="left:-144.5px;width:2000px;text-align:center;top:265.31px;font-size:11.8px;line-height:11.8px;color:#3a3a3a;"><span id="t68">K</span></div>
<div class="t" style="left:-69.5px;width:2000px;text-align:center;top:265.31px;font-size:11.8px;line-height:11.8px;color:#3a3a3a;"><span id="t69">L</span></div>
<div class="t" style="left:5.5px;width:2000px;text-align:center;top:265.31px;font-size:11.8px;line-height:11.8px;color:#3a3a3a;"><span id="t70">M</span></div>
<div class="t" style="left:80.5px;width:2000px;text-align:center;top:265.31px;font-size:11.8px;line-height:11.8px;color:#3a3a3a;"><span id="t71">N</span></div>
<div class="t" style="left:155.5px;width:2000px;text-align:center;top:265.31px;font-size:11.8px;line-height:11.8px;color:#3a3a3a;"><span id="t72">O</span></div>
<div class="t" style="left:230.5px;width:2000px;text-align:center;top:265.31px;font-size:11.8px;line-height:11.8px;color:#3a3a3a;"><span id="t73">P</span></div>
<div class="t" style="left:-987.5px;width:2000px;text-align:center;top:284.94px;font-size:12px;line-height:12px;color:#3a3a3a;"><span id="t74">1</span></div>
<div class="t" style="left:-987.5px;width:2000px;text-align:center;top:302.94px;font-size:12px;line-height:12px;color:#3a3a3a;"><span id="t75">2</span></div>
<div class="t" style="left:-987.5px;width:2000px;text-align:center;top:321.94px;font-size:12px;line-height:12px;color:#3a3a3a;"><span id="t76">3</span></div>
<div class="t" style="left:-987.5px;width:2000px;text-align:center;top:369.94px;font-size:12px;line-height:12px;color:#5a5a5a;"><span id="t77">4</span></div>
<div class="t" style="left:-987.5px;width:2000px;text-align:center;top:388.94px;font-size:12px;line-height:12px;color:#3a3a3a;"><span id="t78">5</span></div>
<div class="t" style="left:-987.5px;width:2000px;text-align:center;top:411.94px;font-size:12px;line-height:12px;color:#3a3a3a;"><span id="t79">6</span></div>
<div class="t" style="left:-987.5px;width:2000px;text-align:center;top:430.94px;font-size:12px;line-height:12px;color:#3a3a3a;"><span id="t80">7</span></div>
<div class="t" style="left:-987.5px;width:2000px;text-align:center;top:454.94px;font-size:12px;line-height:12px;color:#3a3a3a;"><span id="t81">8</span></div>
<div class="t" style="left:-987.5px;width:2000px;text-align:center;top:479.94px;font-size:12px;line-height:12px;color:#3a3a3a;"><span id="t82">9</span></div>
<div class="t" style="left:-987.5px;width:2000px;text-align:center;top:497.94px;font-size:12px;line-height:12px;color:#3a3a3a;"><span id="t83">10</span></div>
<div class="t" style="left:-987.5px;width:2000px;text-align:center;top:516.94px;font-size:12px;line-height:12px;color:#3a3a3a;"><span id="t84">11</span></div>
<div class="t" style="left:-987.5px;width:2000px;text-align:center;top:535.94px;font-size:12px;line-height:12px;color:#3a3a3a;"><span id="t85">12</span></div>
<div class="t" style="left:-987.5px;width:2000px;text-align:center;top:554.94px;font-size:12px;line-height:12px;color:#3a3a3a;"><span id="t86">13</span></div>
<div class="t" style="left:-987.5px;width:2000px;text-align:center;top:573.94px;font-size:12px;line-height:12px;color:#3a3a3a;"><span id="t87">14</span></div>
<div class="t" style="left:-987.5px;width:2000px;text-align:center;top:592.94px;font-size:12px;line-height:12px;color:#3a3a3a;"><span id="t88">15</span></div>
<div class="t" style="left:-987.5px;width:2000px;text-align:center;top:611.94px;font-size:12px;line-height:12px;color:#3a3a3a;"><span id="t89">16</span></div>
<div class="t" style="left:-987.5px;width:2000px;text-align:center;top:630.94px;font-size:12px;line-height:12px;color:#3a3a3a;"><span id="t90">17</span></div>
<div class="t" style="left:-987.5px;width:2000px;text-align:center;top:649.94px;font-size:12px;line-height:12px;color:#3a3a3a;clip-path:inset(0 0 5.5px 0);"><span id="t91">18</span></div>
<div class="t" style="left:112.2px;top:307.18px;font-size:15.5px;line-height:15.5px;color:#151515;transform:scaleX(1.0200);transform-origin:left;-webkit-text-stroke:0.25px #151515;"><span id="t92">Calcula la prestación de maternidad de Elena</span></div>
<div class="t" style="left:109.4px;top:328.48px;font-size:15.5px;line-height:15.5px;color:#151515;transform:scaleX(1.0251);transform-origin:left;-webkit-text-stroke:0.25px #151515;"><span id="t93">Jiménez, trabajadora en alta del grupo 4, que ha</span></div>
<div class="t" style="left:109.4px;top:349.38px;font-size:15.5px;line-height:15.5px;color:#151515;transform:scaleX(0.9942);transform-origin:left;-webkit-text-stroke:0.25px #151515;"><span id="t94">tenido <b>un parto de gemelos el día 15 de enero</b>. Las</span></div>
<div class="t" style="left:109.4px;top:370.63px;font-size:15.5px;line-height:15.5px;color:#151515;transform:scaleX(0.9623);transform-origin:left;-webkit-text-stroke:0.25px #151515;"><span id="t95"><b>bases de cotización de contingencias comunes</b> del</span></div>
<div class="t" style="left:109.4px;top:392.18px;font-size:15.5px;line-height:15.5px;color:#151515;transform:scaleX(1.0283);transform-origin:left;-webkit-text-stroke:0.25px #151515;"><span id="t96">mes anterior  es de <b>1.320,00€.</b></span></div>
<div class="t" style="left:109.4px;top:413.78px;font-size:15.5px;line-height:15.5px;color:#151515;transform:scaleX(1.0012);transform-origin:left;-webkit-text-stroke:0.25px #151515;"><span id="t97">¿Cuál sería la prestación diaria?</span></div>
<div class="t" style="left:109.4px;top:435.38px;font-size:15.5px;line-height:15.5px;color:#151515;transform:scaleX(1.0306);transform-origin:left;-webkit-text-stroke:0.25px #151515;"><span id="t98">¿Cuánto habrá cobrado durante toda  la prestación?</span></div>
<div class="t" style="left:109.4px;top:456.58px;font-size:15.5px;line-height:15.5px;color:#151515;transform:scaleX(0.9941);transform-origin:left;-webkit-text-stroke:0.25px #151515;"><span id="t99">¿Cuánto le retendrán de IRPF?</span></div>
<div class="t" style="left:555.6px;top:342.13px;font-size:14.5px;line-height:14.5px;color:#111;font-weight:bold;transform:scaleX(0.9749);transform-origin:left;"><span id="t100">Base</span></div>
<div class="t" style="left:555.6px;top:365.33px;font-size:14.5px;line-height:14.5px;color:#111;font-weight:bold;transform:scaleX(1.0510);transform-origin:left;"><span id="t101">reguladora =</span></div>
<div class="t" style="left:671.6px;top:365.53px;font-size:14.5px;line-height:14.5px;color:#111;font-weight:bold;transform:scaleX(1.0121);transform-origin:left;"><span id="t102">BCCC/30</span></div>
<div class="t" style="left:795.3px;top:365.53px;font-size:14.5px;line-height:14.5px;color:#111;font-weight:bold;transform:scaleX(1.1028);transform-origin:left;"><span id="t103">44</span></div>
<div class="t" style="left:820.6px;top:365.53px;font-size:14.5px;line-height:14.5px;color:#111;font-weight:bold;transform:scaleX(1.1620);transform-origin:left;"><span id="t104">€/día</span></div>
<div class="t" style="left:554px;top:410.87px;font-size:11.5px;line-height:11.5px;color:#1e1e1e;transform:scaleX(1.1081);transform-origin:left;-webkit-text-stroke:0.2px #1e1e1e;"><span id="t105">Cobro prestación es el</span></div>
<div class="t" style="left:686.2px;top:408.95px;font-size:14px;line-height:14px;color:#111;font-weight:bold;transform:scaleX(1.1141);transform-origin:left;"><span id="t106">100%</span></div>
<div class="t" style="left:730.8px;top:410.87px;font-size:11.5px;line-height:11.5px;color:#1e1e1e;transform:scaleX(1.1056);transform-origin:left;-webkit-text-stroke:0.2px #1e1e1e;"><span id="t107">de la base reguladora</span></div>
<div class="t" style="left:554px;top:452.57px;font-size:11.5px;line-height:11.5px;color:#1e1e1e;transform:scaleX(1.1035);transform-origin:left;-webkit-text-stroke:0.2px #1e1e1e;"><span id="t108">Durante las</span></div>
<div class="t" style="left:624px;top:449.13px;font-size:15.8px;line-height:15.8px;color:#111;font-weight:bold;transform:scaleX(0.9639);transform-origin:left;"><span id="t109">16 semanas + 2 adicionales por el segundo hijo</span></div>
<div class="t" style="left:972.2px;top:452.57px;font-size:11.5px;line-height:11.5px;color:#1e1e1e;transform:scaleX(1.1167);transform-origin:left;-webkit-text-stroke:0.2px #1e1e1e;"><span id="t110">que dura la baja de maternidad cobrará cobrará</span></div>
<div class="t" style="left:579px;top:474.69px;font-size:15.6px;line-height:15.6px;color:#111;font-weight:bold;transform:scaleX(1.0621);transform-origin:left;"><span id="t111">5.544,00 €</span></div>
<div class="t" style="left:672.1px;top:478.07px;font-size:11.5px;line-height:11.5px;color:#1e1e1e;transform:scaleX(1.1516);transform-origin:left;-webkit-text-stroke:0.2px #1e1e1e;"><span id="t112">en total durante todo el tiempo que dura la baja</span></div>
<div class="t" style="left:76.9px;top:661.90px;font-size:13px;line-height:13px;color:#333;transform:scaleX(0.8945);transform-origin:left;-webkit-text-stroke:0.3px #333;"><span id="t113">...</span></div>
<div class="t" style="left:111.6px;top:662.09px;font-size:12.3px;line-height:12.3px;color:#444;transform:scaleX(0.9805);transform-origin:left;"><span id="t114">Prestación jubilación</span></div>
<div class="t" style="left:250.4px;top:662.79px;font-size:12.3px;line-height:12.3px;color:#217346;font-weight:bold;transform:scaleX(0.9798);transform-origin:left;"><span id="t115">Prestación maternidad</span></div>
<div class="t" style="left:406.9px;top:662.09px;font-size:12.3px;line-height:12.3px;color:#444;transform:scaleX(1.0142);transform-origin:left;"><span id="t116">Prest viudedad y orfandad</span></div>
<div class="t" style="left:584.4px;top:662.09px;font-size:12.3px;line-height:12.3px;color:#444;transform:scaleX(0.9887);transform-origin:left;"><span id="t117">Pensión en favor famil</span></div>
<div class="t" style="left:712.5px;top:661.90px;font-size:13px;line-height:13px;color:#333;transform:scaleX(0.9222);transform-origin:left;-webkit-text-stroke:0.3px #333;"><span id="t118">...</span></div>
<div class="t" style="left:7.9px;top:687.09px;font-size:11px;line-height:11px;color:#555;transform:scaleX(0.9333);transform-origin:left;"><span id="t119">Listo</span></div>
<div class="t" style="left:48.4px;top:687.09px;font-size:11px;line-height:11px;color:#555;transform:scaleX(0.9543);transform-origin:left;"><span id="t120">Recuperado</span></div>
<div class="t" style="left:1236.5px;top:687.29px;font-size:11px;line-height:11px;color:#555;transform:scaleX(0.8717);transform-origin:left;"><span id="t121">100 %</span></div>
</body></html>
